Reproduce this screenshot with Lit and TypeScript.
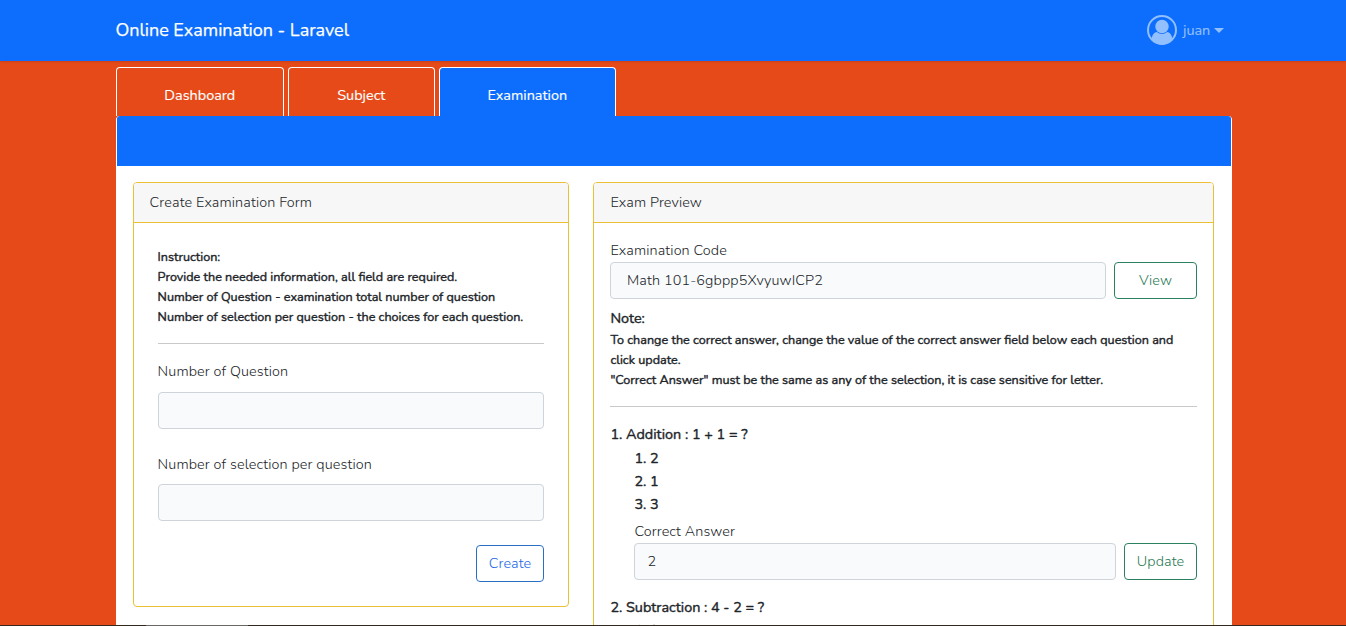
import { LitElement, html, css } from "lit";
import { customElement } from "lit/decorators.js";

const TABS = [
  { label: "Dashboard", active: false },
  { label: "Subject", active: false },
  { label: "Examination", active: true },
];

const QUESTIONS = [
  { text: "1. Addition : 1 + 1 = ?", choices: ["1. 2", "2. 1", "3. 3"], answer: "2" },
  { text: "2. Subtraction : 4 - 2 = ?", choices: ["1. 2"], answer: "" },
];

@customElement("app-root")
export class AppRoot extends LitElement {
  static styles = css`
    *, *::before, *::after { box-sizing: border-box; }
    :host {
      display: flex;
      flex-direction: column;
      height: 626px;
      overflow: hidden;
      font: 350 14.4px/23px Nunito, "Open Sans", sans-serif;
      letter-spacing: 0.12px;
      color: #212529;
      background: #e64a19;
    }
    .page { flex: 1; min-height: 0; overflow: hidden; }
    .navbar {
      height: 61px;
      background: #0d6efd;
      box-shadow: 0 1px 2px rgba(0, 0, 0, 0.12);
      display: flex;
      align-items: center;
      justify-content: space-between;
      padding: 0 122px 1px 115.4px;
      font-weight: 400;
      letter-spacing: 0;
    }
    .brand { font-size: 18px; line-height: 28px; color: #fff; -webkit-text-stroke: 0.25px #fff; }
    .user { display: flex; align-items: center; color: #92bffe; }
    .user svg { width: 30px; height: 30px; display: block; margin-right: 6px; }
    .caret {
      margin: 0 0 0 3px;
      border: 5px solid transparent;
      border-top-color: currentColor;
      border-bottom: 0;
    }
    .user span:first-of-type { width: 28px; -webkit-text-stroke: 0.15px currentColor; }
    .tabs { display: flex; gap: 4px; padding: 6px 0 0 116px; height: 55px; font-weight: 400; letter-spacing: 0; }
    .tab {
      border: 1px solid #fff;
      border-bottom: 0;
      border-radius: 4px 4px 0 0;
      padding: 16px 0.4px 0 0;
      text-align: center;
      color: #fff;
      width: 168px;
      -webkit-text-stroke: 0.15px #fff;
    }
    .tab:nth-child(2) { width: 147px; }
    .tab:nth-child(3) { width: 177px; }
    .active { background: #0d6efd; }
    .panel {
      width: 1116px;
      margin-left: 116px;
      border: 1px solid #fff;
      border-width: 0 1px;
      border-radius: 4px 4px 0 0;
      background: #fff;
    }
    .panel-head { height: 50px; background: #0d6efd; border-radius: 3px 3px 0 0; }
    .columns {
      display: grid;
      grid-template-columns: 436px 621px;
      gap: 24px;
      padding: 16px;
      align-items: start;
    }
    .card { border: 1px solid #ecc035; border-radius: 4px; }
    .card-head {
      height: 40px;
      padding: 8px 15.6px;
      background: #f7f7f7;
      border-bottom: 1px solid #ecc035;
      border-radius: 3px 3px 0 0;
    }
    .form { padding: 24px; }
    .form .text { margin-left: -0.4px; }
    .preview { padding: 16px; }
    .preview .text { padding-left: 0.4px; }
    .preview-title { padding-left: 16.4px; }
    .strong { font-weight: 400; letter-spacing: 0; -webkit-text-stroke: 0.4px currentColor; }
    .small { font-size: 12.6px; line-height: 20px; }
    .rule { height: 1px; background: #c8c9ca; margin: 16px 0; }
    .field {
      height: 37px;
      border: 1px solid #ced4da;
      border-radius: 4px;
      background: #f8fafc;
      padding: 6px 12.4px;
      flex: 1;
    }
    .code { padding-left: 16px; }
    .button {
      height: 37px;
      border: 1px solid #2c8160;
      border-radius: 4px;
      background: #fff;
      color: #2a7a55;
      font: inherit;
      letter-spacing: inherit;
      padding: 0;
      width: 73px;
    }
    .view { width: 83px; }
    .create { width: 68px; color: #2468e8; border-color: #2a6fc4; }
    .row { display: flex; gap: 8px; }
    .end { justify-content: flex-end; margin-top: 24px; }
    .form .field { margin-top: 9px; }
    .form .second { margin-top: 24px; }
    .form .second .field { margin-top: 8px; }
    .note { margin-top: 8px; }
    .question { margin-bottom: 16px; }
    .answers { padding: 1px 0 0 24px; }
    .question:last-child .answers { padding-top: 0; }
    .answer-label { margin-top: 4px; }
    .edge { height: 1px; flex: none; display: grid; grid-template-columns: 146px 102px 1fr; background: #33291f; }
    .edge-mark { grid-column: 2; background: #6b6765; }
  `;

  render() {
    return html`
      <div class="page">
        <header class="navbar">
          <span class="brand">Online Examination - Laravel</span>
          <div class="user">
            <svg viewBox="0 0 30 30">
              <circle cx="15" cy="15" r="14" fill="none" stroke="currentColor" stroke-width="2" />
              <circle cx="15" cy="11.5" r="6.7" fill="currentColor" />
              <path fill="currentColor" d="M9.900 17C6.800 17.200 4.800 20.500 4.600 25a14 14 0 0 0 20.800 0c-.2-4.500-2.200-7.800-5.300-8a7.500 7.500 0 0 1-10.200 0z" />
            </svg>
            <span>juan</span><span class="caret"></span>
          </div>
        </header>
        <nav class="tabs">
          ${TABS.map((t) => html`<div class="tab ${t.active ? "active" : ""}">${t.label}</div>`)}
        </nav>
        <main class="panel">
          <div class="panel-head"></div>
          <div class="columns">
            <section class="card">
              <div class="card-head">Create Examination Form</div>
              <div class="form">
                <div class="strong small text">
                  <div>Instruction:</div>
                  <div>Provide the needed information, all field are required.</div>
                  <div>Number of Question - examination total number of question</div>
                  <div>Number of selection per question - the choices for each question.</div>
                </div>
                <div class="rule"></div>
                <div class="text">Number of Question</div>
                <div class="field"></div>
                <div class="second">
                  <div class="text">Number of selection per question</div>
                  <div class="field"></div>
                </div>
                <div class="row end"><button class="button create">Create</button></div>
              </div>
            </section>
            <section class="card">
              <div class="card-head preview-title">Exam Preview</div>
              <div class="preview">
                <div class="text">Examination Code</div>
                <div class="row">
                  <div class="field code">Math 101-6gbpp5XvyuwICP2</div>
                  <button class="button view">View</button>
                </div>
                <div class="strong note text">Note:</div>
                <div class="strong small text">
                  <div>To change the correct answer, change the value of the correct answer field below each question and click update.</div>
                  <div>"Correct Answer" must be the same as any of the selection, it is case sensitive for letter.</div>
                </div>
                <div class="rule"></div>
                ${QUESTIONS.map(
                  (q) => html`<div class="question">
                    <div class="strong text">${q.text}</div>
                    <div class="answers">
                      ${q.choices.map((c) => html`<div class="strong text">${c}</div>`)}
                      ${q.answer
                        ? html`<div class="answer-label text">Correct Answer</div>
                            <div class="row">
                              <div class="field">${q.answer}</div>
                              <button class="button">Update</button>
                            </div>`
                        : ""}
                    </div>
                  </div>`,
                )}
              </div>
            </section>
          </div>
        </main>
      </div>
      <div class="edge"><div class="edge-mark"></div></div>
    `;
  }
}
